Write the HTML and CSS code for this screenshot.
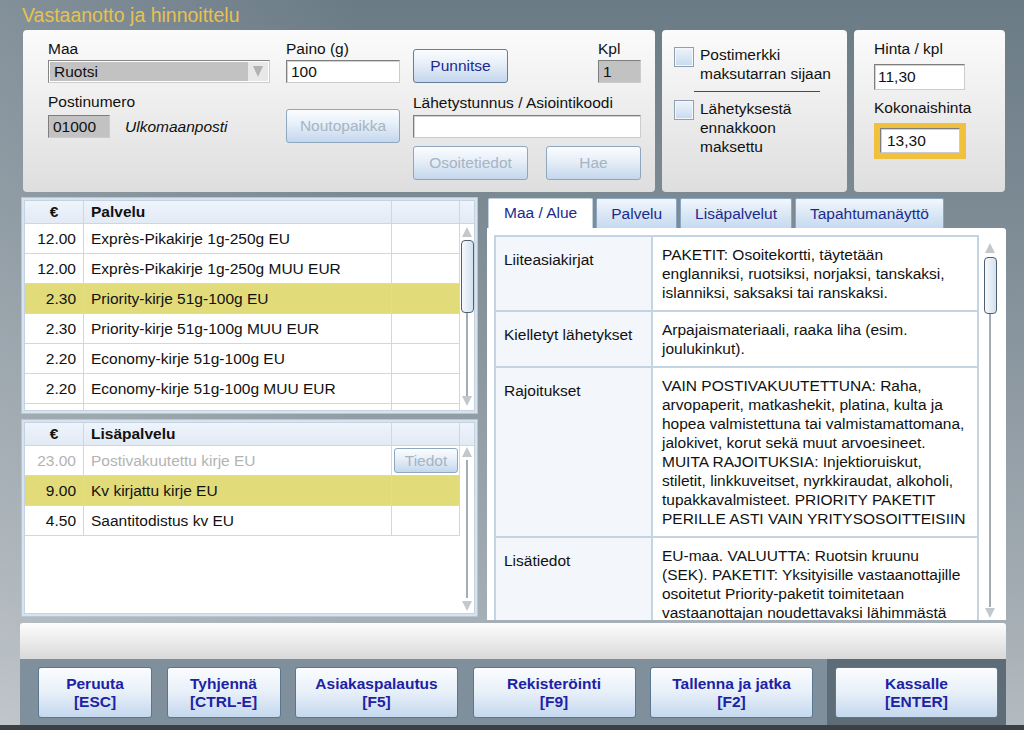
FILE: index.html
```html
<!DOCTYPE html>
<html lang="fi">
<head>
<meta charset="utf-8">
<title>Vastaanotto ja hinnoittelu</title>
<link rel="stylesheet" href="styles.css">
</head>
<body>
<div class="app">
  <div class="title">Vastaanotto ja hinnoittelu</div>

  <div class="top">
    <section class="panel p-form">
      <div class="fcol c1">
        <div class="lbl">Maa</div>
        <div class="select"><span class="sel-val">Ruotsi</span><span class="sel-arrow"></span></div>
        <div class="lbl lbl-post">Postinumero</div>
        <div class="postrow"><div class="inp grey w62">01000</div><span class="italic">Ulkomaanposti</span></div>
      </div>
      <div class="fcol c2">
        <div class="lbl">Paino (g)</div>
        <div class="inp">100</div>
        <div class="btn dis nouto">Noutopaikka</div>
      </div>
      <div class="fcol c3">
        <div class="c3top">
          <div class="btn punnitse">Punnitse</div>
          <div class="kpl"><div class="lbl">Kpl</div><div class="inp grey">1</div></div>
        </div>
        <div class="lbl lbl-tunnus">Lähetystunnus / Asiointikoodi</div>
        <div class="inp inp-tunnus"></div>
        <div class="btnrow"><div class="btn dis w115">Osoitetiedot</div><div class="btn dis w95">Hae</div></div>
      </div>
    </section>

    <section class="panel p-check">
      <div class="chkrow"><span class="chk"></span><span class="chktext">Postimerkki<br>maksutarran sijaan</span></div>
      <div class="sep"></div>
      <div class="chkrow chkrow2"><span class="chk"></span><span class="chktext">Lähetyksestä<br>ennakkoon<br>maksettu</span></div>
    </section>

    <section class="panel p-price">
      <div class="lbl">Hinta / kpl</div>
      <div class="inp price-inp">11,30</div>
      <div class="lbl lbl-total">Kokonaishinta</div>
      <div class="goldbox"><div class="inp total-inp">13,30</div></div>
    </section>
  </div>

  <div class="middle">
    <div class="leftcol">
      <div class="grid grid-up">
        <div class="grid-in">
          <div class="ghead">
            <div class="gc gc-eur">€</div>
            <div class="gc gc-name">Palvelu</div>
            <div class="gc"></div>
            <div class="gc gc-last"></div>
          </div>
          <div class="gbody">
            <div class="rows">
              <div class="grow"><div class="gc gc-price">12.00</div><div class="gc gc-name">Exprès-Pikakirje 1g-250g EU</div><div class="gc"></div></div>
              <div class="grow"><div class="gc gc-price">12.00</div><div class="gc gc-name">Exprès-Pikakirje 1g-250g MUU EUR</div><div class="gc"></div></div>
              <div class="grow sel"><div class="gc gc-price">2.30</div><div class="gc gc-name">Priority-kirje 51g-100g EU</div><div class="gc"></div></div>
              <div class="grow"><div class="gc gc-price">2.30</div><div class="gc gc-name">Priority-kirje 51g-100g MUU EUR</div><div class="gc"></div></div>
              <div class="grow"><div class="gc gc-price">2.20</div><div class="gc gc-name">Economy-kirje 51g-100g EU</div><div class="gc"></div></div>
              <div class="grow"><div class="gc gc-price">2.20</div><div class="gc gc-name">Economy-kirje 51g-100g MUU EUR</div><div class="gc"></div></div>
              <div class="grow"><div class="gc gc-price"></div><div class="gc gc-name"></div><div class="gc"></div></div>
            </div>
            <div class="vscroll vs-up">
              <span class="arr-up"></span>
              <span class="thumb th-up"></span>
              <span class="track"></span>
              <span class="arr-down"></span>
            </div>
          </div>
        </div>
      </div>

      <div class="grid grid-low">
        <div class="grid-in">
          <div class="ghead">
            <div class="gc gc-eur">€</div>
            <div class="gc gc-name">Lisäpalvelu</div>
            <div class="gc"></div>
            <div class="gc gc-last"></div>
          </div>
          <div class="gbody">
            <div class="rows">
              <div class="grow disabled"><div class="gc gc-price">23.00</div><div class="gc gc-name">Postivakuutettu kirje EU</div><div class="gc gc-btn"><div class="btn dis tiedot">Tiedot</div></div></div>
              <div class="grow sel"><div class="gc gc-price">9.00</div><div class="gc gc-name">Kv kirjattu kirje EU</div><div class="gc"></div></div>
              <div class="grow"><div class="gc gc-price">4.50</div><div class="gc gc-name">Saantitodistus kv EU</div><div class="gc"></div></div>
            </div>
            <div class="vscroll vs-low">
              <span class="arr-up"></span>
              <span class="track"></span>
              <span class="arr-down"></span>
            </div>
          </div>
        </div>
      </div>
    </div>

    <div class="tabsec">
      <div class="tabs">
        <div class="tab active">Maa / Alue</div>
        <div class="tab">Palvelu</div>
        <div class="tab">Lisäpalvelut</div>
        <div class="tab">Tapahtumanäyttö</div>
      </div>
      <div class="tabcontent">
        <div class="itable">
          <div class="irow"><div class="ilabel">Liiteasiakirjat</div><div class="ivalue">PAKETIT: Osoitekortti, täytetään<br>englanniksi, ruotsiksi, norjaksi, tanskaksi,<br>islanniksi, saksaksi tai ranskaksi.</div></div>
          <div class="irow"><div class="ilabel">Kielletyt lähetykset</div><div class="ivalue">Arpajaismateriaali, raaka liha (esim.<br>joulukinkut).</div></div>
          <div class="irow"><div class="ilabel">Rajoitukset</div><div class="ivalue">VAIN POSTIVAKUUTETTUNA: Raha,<br>arvopaperit, matkashekit, platina, kulta ja<br>hopea valmistettuna tai valmistamattomana,<br>jalokivet, korut sekä muut arvoesineet.<br>MUITA RAJOITUKSIA: Injektioruiskut,<br>stiletit, linkkuveitset, nyrkkiraudat, alkoholi,<br>tupakkavalmisteet. PRIORITY PAKETIT<br>PERILLE ASTI VAIN YRITYSOSOITTEISIIN</div></div>
          <div class="irow"><div class="ilabel">Lisätiedot</div><div class="ivalue">EU-maa. VALUUTTA: Ruotsin kruunu<br>(SEK). PAKETIT: Yksityisille vastaanottajille<br>osoitetut Priority-paketit toimitetaan<br>vastaanottajan noudettavaksi lähimmästä</div></div>
        </div>
        <div class="vscroll vs-right">
          <span class="arr-up"></span>
          <span class="thumb th-right"></span>
          <span class="track"></span>
          <span class="arr-down"></span>
        </div>
      </div>
    </div>
  </div>

  <div class="status"></div>

  <div class="toolbar">
    <div class="tbtns">
      <div class="tbtn w114">Peruuta<br>[ESC]</div>
      <div class="tbtn w114">Tyhjennä<br>[CTRL-E]</div>
      <div class="tbtn w163">Asiakaspalautus<br>[F5]</div>
      <div class="tbtn w163">Rekisteröinti<br>[F9]</div>
      <div class="tbtn w163">Tallenna ja jatka<br>[F2]</div>
    </div>
    <div class="kassa">
      <div class="tbtn w163">Kassalle<br>[ENTER]</div>
    </div>
  </div>
</div>
<div class="foot"></div>
</body>
</html>
```

FILE: styles.css
```css
* { box-sizing: border-box; }

html, body { margin: 0; padding: 0; }

body {
  width: 1024px;
  height: 730px;
  overflow: hidden;
  font-family: "Liberation Sans", Arial, sans-serif;
  font-size: 15.5px;
  color: #111;
  background:
    linear-gradient(90deg, rgba(255,255,255,0.16), rgba(255,255,255,0) 35%),
    linear-gradient(180deg, #6b7b86 0%, #7d8b95 30%, #a2abb2 80%, #b4bbc0 100%);
}

.app {
  height: 725px;
  padding: 0 18px 0 20px;
}

.foot { height: 5px; background: #3b4045; }

.title {
  height: 30px;
  padding: 1px 0 0 2px;
  line-height: 28px;
  font-size: 19.5px;
  color: #e8c14f;
  white-space: nowrap;
}

/* ---------- top panels ---------- */
.top {
  display: flex;
  gap: 7px;
  height: 162px;
  margin: 0 1px 0 3px;
}

.panel {
  background: linear-gradient(#fbfbfb, #dedede);
  border-radius: 4px;
}

.p-form {
  width: 632px;
  display: flex;
  padding: 10px 0 0 25px;
}

.fcol { display: flex; flex-direction: column; }
.c1 { width: 222px; }
.c2 { width: 114px; margin-left: 16px; }
.c3 { width: 228px; margin-left: 13px; }

.lbl {
  height: 18px;
  line-height: 18px;
  white-space: nowrap;
}

.select {
  margin-top: 2px;
  height: 23px;
  display: flex;
  padding: 1px;
  background: #fff;
  border: 1px solid;
  border-color: #858585 #cdcdcd #cdcdcd #858585;
}
.sel-val {
  flex: 1;
  background: #c2c2c2;
  padding-left: 4px;
  line-height: 19px;
}
.sel-arrow {
  width: 20px;
  background: #e8e8e8;
  display: flex;
  align-items: center;
  justify-content: center;
}
.sel-arrow::after {
  content: "";
  border-left: 5px solid transparent;
  border-right: 5px solid transparent;
  border-top: 11px solid #b2b2b2;
}

.inp {
  margin-top: 2px;
  height: 23px;
  background: #fff;
  border: 1px solid;
  border-color: #7e7e7e #cccccc #cccccc #7e7e7e;
  box-shadow: inset 1px 1px 0 #d2d2d2;
  padding-left: 4px;
  line-height: 21px;
  white-space: nowrap;
}
.grey { background: #c2c2c2; box-shadow: none; }

.lbl-post { margin-top: 10px; }
.postrow { display: flex; align-items: center; margin-top: 4px; }
.postrow .inp { margin-top: 0; }
.w62 { width: 62px; }
.italic { font-style: italic; margin-left: 15px; line-height: 23px; }

.btn {
  display: flex;
  align-items: center;
  justify-content: center;
  height: 34px;
  border: 1px solid #62809c;
  border-radius: 3px;
  background: linear-gradient(#fbfdff 0%, #e6eef8 45%, #c4d7ed 100%);
  color: #1c2a8e;
  white-space: nowrap;
}
.btn.dis { color: #a6b4c3; border-color: #8ea6be; }

.nouto { margin-top: 26px; }

.c3top { display: flex; justify-content: space-between; align-items: flex-start; }
.punnitse { width: 95px; margin-top: 9px; }
.kpl { width: 43px; }
.lbl-tunnus { margin-top: 11px; }
.inp-tunnus { margin-top: 3px; }
.btnrow { display: flex; justify-content: space-between; margin-top: 8px; }
.w115 { width: 115px; }
.w95 { width: 95px; }

.p-check {
  width: 185px;
  padding: 15px 0 0 12px;
}
.chkrow { display: flex; gap: 6px; align-items: flex-start; }
.chk {
  width: 20px;
  height: 20px;
  margin-top: 2px;
  flex: none;
  border: 1px solid #8f9fb0;
  box-shadow: inset 0 0 0 1px #f4f8fc;
  background: linear-gradient(#eef4fb, #c8daee);
}
.chktext { line-height: 19px; white-space: nowrap; }
.sep {
  width: 126px;
  height: 1px;
  margin: 8px 0 0 20px;
  background: #4a4a4a;
}
.chkrow2 { margin-top: 7px; }
.chkrow2 .chk { margin-top: 1px; }

.p-price {
  width: 151px;
  padding: 10px 0 0 20px;
}
.price-inp {
  margin-top: 6px;
  width: 91px;
  height: 26px;
  line-height: 24px;
  padding-left: 3px;
}
.lbl-total { margin-top: 9px; }
.goldbox {
  margin-top: 6px;
  width: 92px;
  height: 36px;
  padding: 5px 6px;
  background: #f0c13e;
}
.total-inp {
  margin-top: 0;
  width: 80px;
  height: 25px;
  line-height: 23px;
  padding-left: 6px;
}

/* ---------- middle ---------- */
.middle {
  display: flex;
  gap: 9px;
  height: 423px;
  margin-top: 5px;
}

.leftcol {
  width: 457px;
  margin-left: 1px;
  display: flex;
  flex-direction: column;
  gap: 5px;
}

.grid {
  border: 1px solid #b6c6d6;
  padding: 2px;
  background: #d9e3ed;
}
.grid-up { height: 217px; }
.grid-low { height: 198px; }

.grid-in {
  height: 100%;
  border: 1px solid #c3d3e3;
  background: #fff;
  display: flex;
  flex-direction: column;
  overflow: hidden;
}

.ghead {
  display: grid;
  grid-template-columns: 59px 308px 68px 12px;
  height: 23px;
  flex: none;
  background: linear-gradient(#eff4fb, #e2eaf5);
  border-bottom: 1px solid #c8d8e8;
  font-weight: bold;
  line-height: 22px;
}

.gc {
  border-right: 1px solid #cad9e8;
  white-space: nowrap;
  overflow: hidden;
}
.gc-last { border-right: none; }
.gc-eur { text-align: center; }
.gc-name { padding-left: 7px; }
.gc-price { text-align: right; padding-right: 7px; }

.gbody {
  flex: 1;
  display: flex;
  overflow: hidden;
}
.rows { width: 435px; overflow: hidden; }

.grow {
  display: grid;
  grid-template-columns: 59px 308px 68px;
  height: 30px;
  line-height: 29px;
  border-bottom: 1px solid #cad9e8;
}
.grow.sel { background: #e1db7a; }
.grow.disabled { color: #b3b3b3; }

.gc-btn { display: flex; align-items: center; padding-left: 2px; }
.tiedot { width: 64px; height: 25px; }

.vscroll {
  width: 14px;
  flex: none;
  display: flex;
  flex-direction: column;
  align-items: center;
}
.arr-up, .arr-down {
  width: 0;
  height: 0;
  flex: none;
  border-left: 5px solid transparent;
  border-right: 5px solid transparent;
}
.arr-up { border-bottom: 10px solid #c3c8cd; }
.arr-down { border-top: 10px solid #c3c8cd; }
.track {
  flex: 1;
  width: 2px;
  background: #a3acb5;
}
.thumb {
  width: 13px;
  flex: none;
  border: 1px solid #4e5f70;
  border-radius: 4px;
  background: linear-gradient(90deg, #f6f9fc, #d2e0ef);
}

.vs-up { padding: 3px 0 4px; }
.th-up { height: 73px; margin-top: 3px; }
.vs-low { padding: 1px 0 2px; }
.vs-low .track { margin: 3px 0; }

/* ---------- tabs ---------- */
.tabsec {
  width: 519px;
  display: flex;
  flex-direction: column;
}
.tabs {
  display: flex;
  gap: 3px;
  height: 30px;
  margin-top: 1px;
  padding-left: 1px;
  flex: none;
}
.tab {
  padding: 0 14px;
  line-height: 29px;
  color: #1c2a8e;
  white-space: nowrap;
  border: 1px solid #8aa6c2;
  border-bottom: none;
  border-radius: 2px 2px 0 0;
  background: linear-gradient(#f0f6fd, #c6daef);
}
.tab.active {
  padding: 0 15px;
  background: #fff;
  border-color: #c2d0de;
  line-height: 27px;
}

.tabcontent {
  flex: 1;
  display: flex;
  gap: 4px;
  background: #fff;
  border-radius: 0 3px 0 0;
  padding: 7px 0 0 7px;
  overflow: hidden;
}

.itable {
  width: 485px;
  flex: none;
  border: 2px solid #c5d4e3;
  border-bottom: none;
  align-self: flex-start;
}
.irow {
  display: grid;
  grid-template-columns: 157px 1fr;
  border-bottom: 2px solid #c5d4e3;
}
.ilabel {
  background: #f3f6fb;
  border-right: 2px solid #c5d4e3;
  padding: 13px 0 0 8px;
  line-height: 19px;
  white-space: nowrap;
}
.ivalue {
  padding: 8px 0 8px 9px;
  line-height: 19px;
  white-space: nowrap;
}

.vs-right { padding: 8px 0 2px; }
.th-right { height: 57px; margin-top: 4px; }
.vs-right .arr-down { margin-top: 1px; }

/* ---------- status + toolbar ---------- */
.status {
  height: 36px;
  margin-top: 3px;
  border-radius: 3px 3px 0 0;
  background: linear-gradient(#fdfdfd, #d9d9d9);
}

.toolbar {
  height: 66px;
  display: flex;
  background: #7f909c;
  padding-left: 18px;
}
.tbtns {
  display: flex;
  gap: 14.5px;
  padding-top: 8px;
}
.tbtn {
  height: 51px;
  border: 1px solid #5b7690;
  border-radius: 3px;
  background: linear-gradient(#fbfdff 0%, #e7eff8 50%, #c4d8ee 100%);
  color: #1d22a4;
  font-weight: bold;
  line-height: 18px;
  text-align: center;
  display: flex;
  align-items: center;
  justify-content: center;
  white-space: nowrap;
}
.w114 { width: 114px; }
.w163 { width: 163px; }

.kassa {
  margin-left: auto;
  width: 179px;
  height: 66px;
  padding: 8px;
  background: #5d6c76;
}
```
